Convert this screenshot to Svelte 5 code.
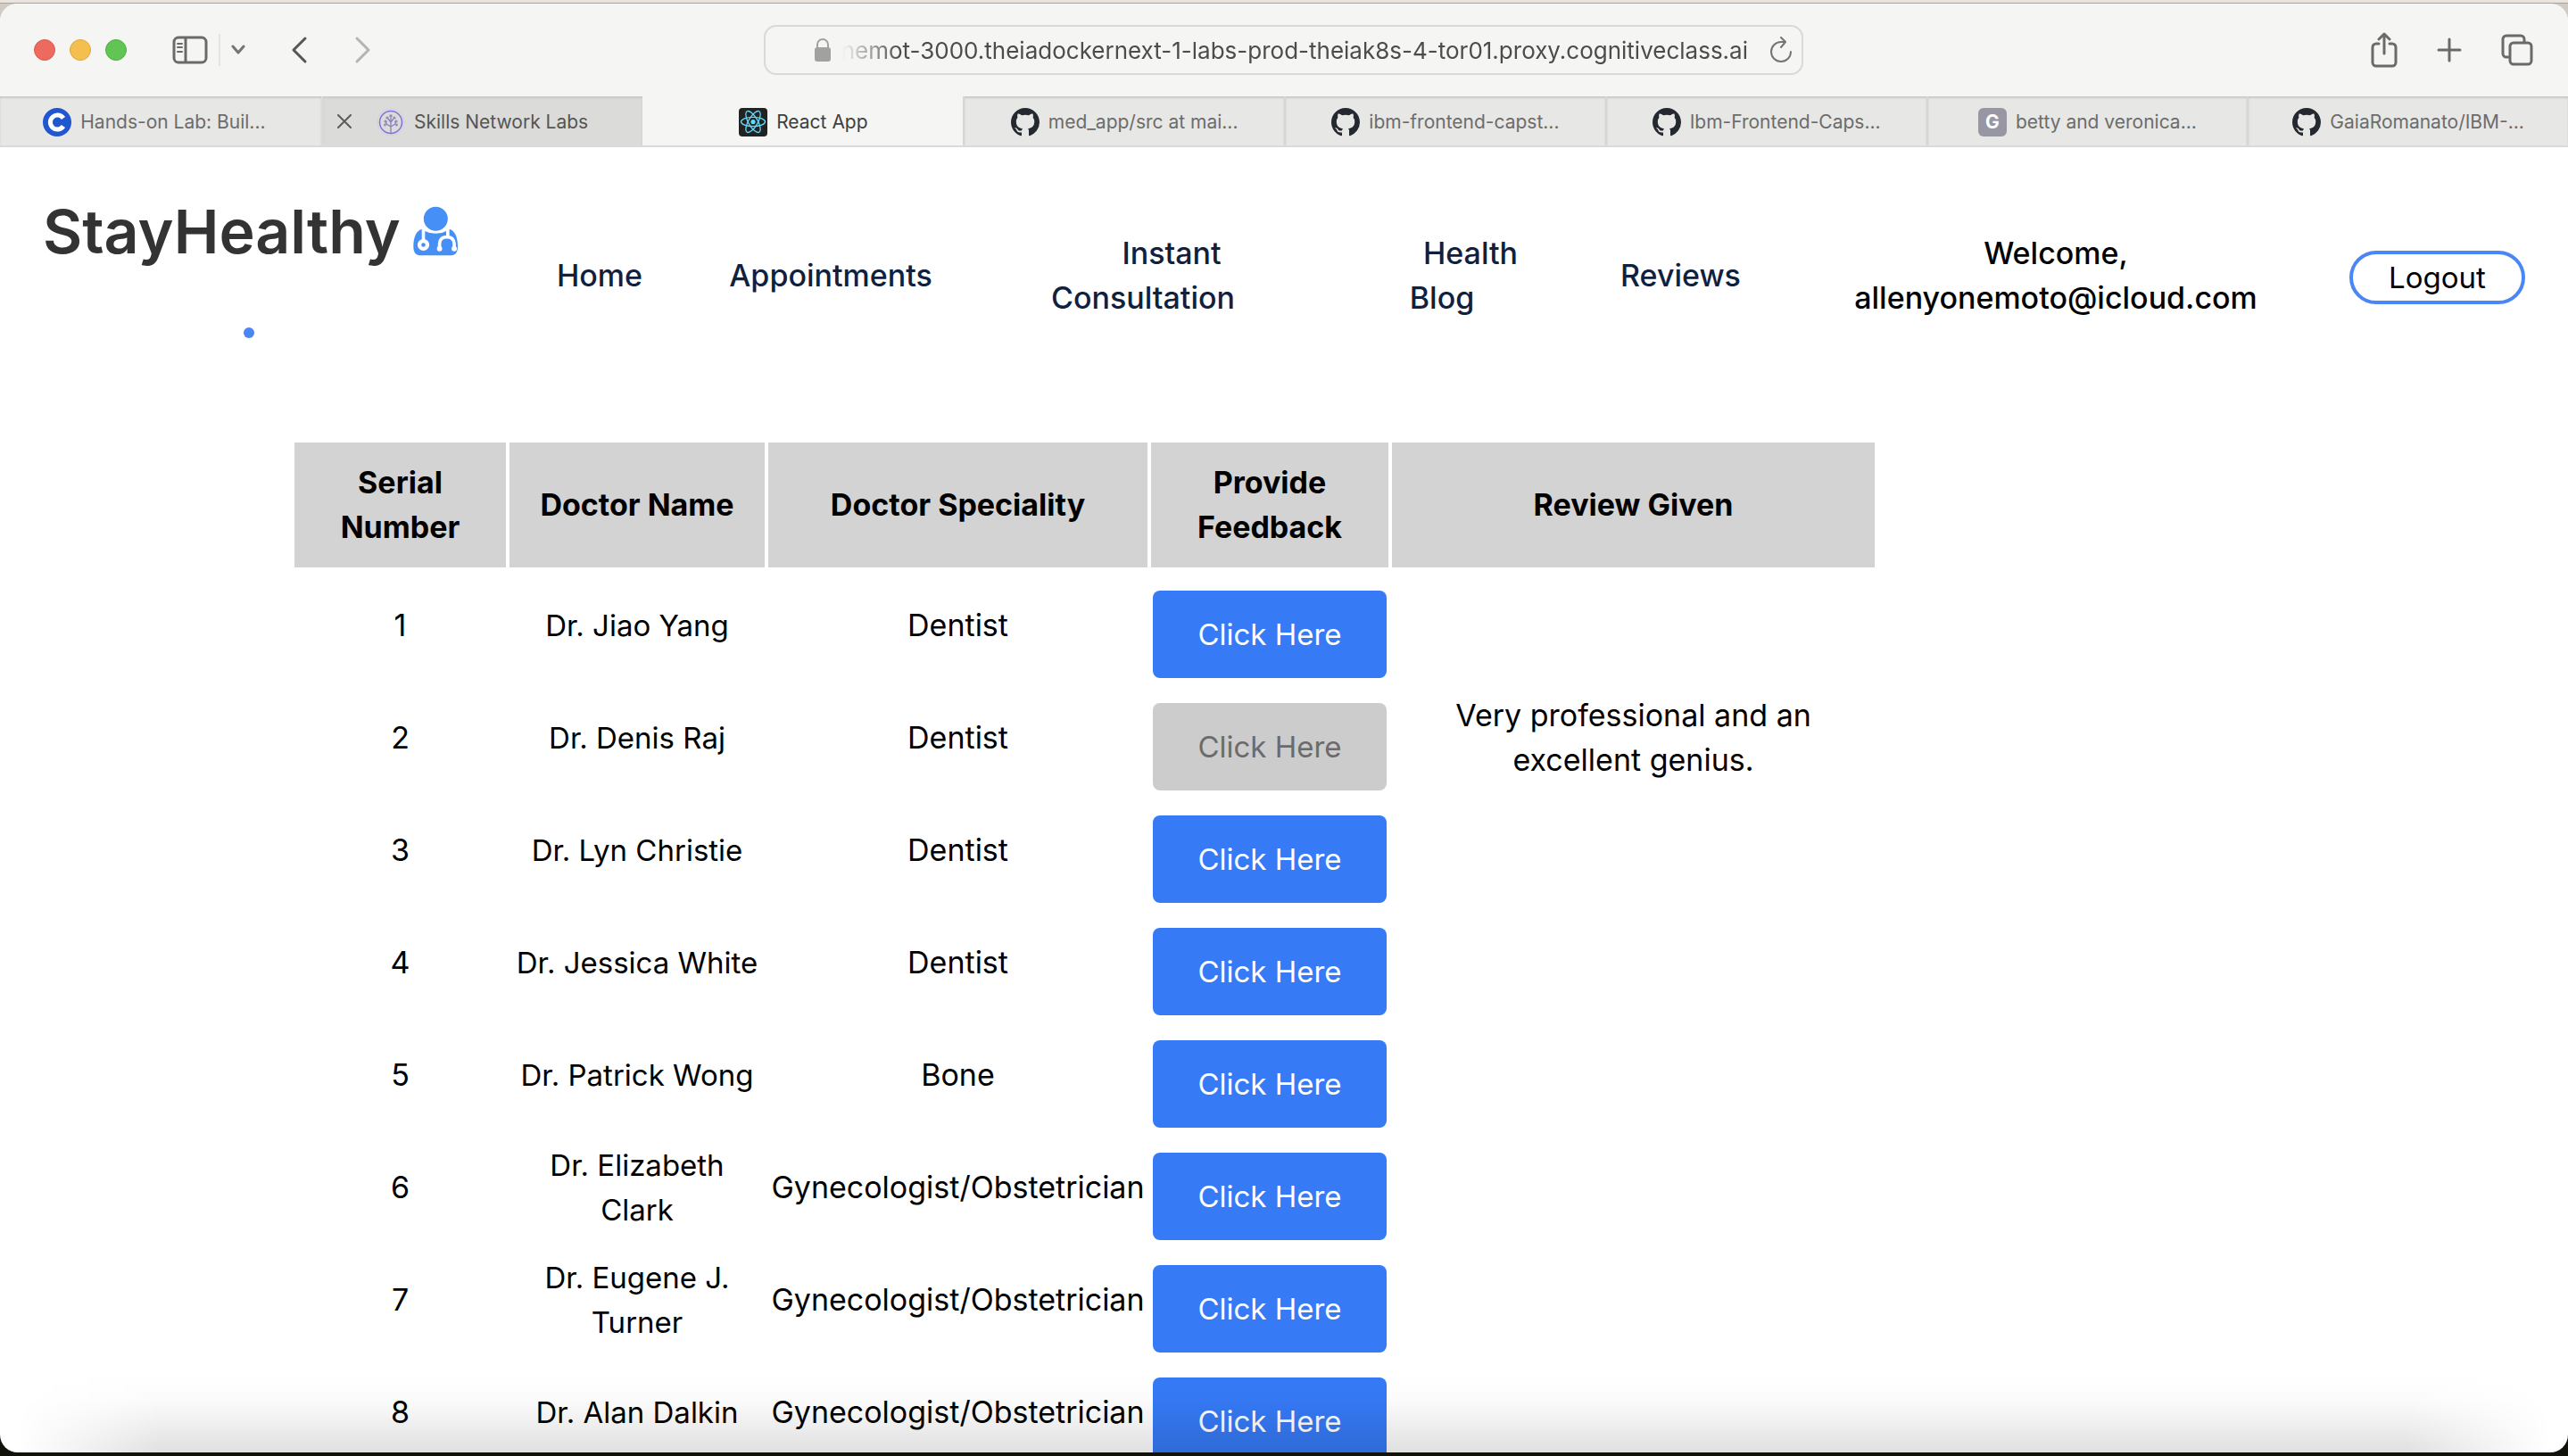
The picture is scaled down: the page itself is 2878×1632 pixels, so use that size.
<script lang="ts">
  type Tab = { title: string; icon: 'coursera' | 'skills' | 'react' | 'github' | 'letter'; state?: 'active' | 'hover' };

  const tabs: Tab[] = [
    { title: 'Hands-on Lab: Buil...', icon: 'coursera' },
    { title: 'Skills Network Labs', icon: 'skills', state: 'hover' },
    { title: 'React App', icon: 'react', state: 'active' },
    { title: 'med_app/src at mai...', icon: 'github' },
    { title: 'ibm-frontend-capst...', icon: 'github' },
    { title: 'Ibm-Frontend-Caps...', icon: 'github' },
    { title: 'betty and veronica...', icon: 'letter' },
    { title: 'GaiaRomanato/IBM-...', icon: 'github' },
  ];

  const doctors = $state([
    { name: 'Dr. Jiao Yang', speciality: 'Dentist', review: '' },
    { name: 'Dr. Denis Raj', speciality: 'Dentist', review: 'Very professional and an excellent genius.' },
    { name: 'Dr. Lyn Christie', speciality: 'Dentist', review: '' },
    { name: 'Dr. Jessica White', speciality: 'Dentist', review: '' },
    { name: 'Dr. Patrick Wong', speciality: 'Bone', review: '' },
    { name: 'Dr. Elizabeth Clark', speciality: 'Gynecologist/Obstetrician', review: '' },
    { name: 'Dr. Eugene J. Turner', speciality: 'Gynecologist/Obstetrician', review: '' },
    { name: 'Dr. Alan Dalkin', speciality: 'Gynecologist/Obstetrician', review: '' },
  ]);

  let address = $state('onemot-3000.theiadockernext-1-labs-prod-theiak8s-4-tor01.proxy.cognitiveclass.ai');
</script>

<div class="desktop">
  <div class="window">
    <header class="toolbar">
      <div class="side left">
        <div class="lights">
          <button class="light red" aria-label="Close window"></button>
          <button class="light yellow" aria-label="Minimise window"></button>
          <button class="light green" aria-label="Zoom window"></button>
        </div>
        <button class="tool" aria-label="Sidebar">
          <svg width="40" height="32" viewBox="0 0 40 32" fill="none" stroke="#6a6a69" stroke-width="3">
            <rect x="2" y="2" width="36" height="28" rx="5" />
            <path d="M15 2v28" />
            <path d="M6 9h5M6 13h5M6 18h5" stroke-width="2" stroke-linecap="round" />
          </svg>
        </button>
        <span class="rule"></span>
        <button class="tool" aria-label="Tab groups">
          <svg width="16" height="12" viewBox="0 0 16 12" fill="none" stroke="#757575" stroke-width="3" stroke-linecap="round" stroke-linejoin="round"><path d="M2 2l6 7 6-7" /></svg>
        </button>
        <button class="tool back" aria-label="Back">
          <svg width="20" height="32" viewBox="0 0 20 32" fill="none" stroke="#555" stroke-width="3" stroke-linecap="round" stroke-linejoin="round"><path d="M17 3L4 16l13 13" /></svg>
        </button>
        <button class="tool forward" aria-label="Forward">
          <svg width="20" height="32" viewBox="0 0 20 32" fill="none" stroke="#b4b4b3" stroke-width="3" stroke-linecap="round" stroke-linejoin="round"><path d="M3 3l13 13L3 29" /></svg>
        </button>
      </div>
      <div class="address">
        <svg width="20" height="28" viewBox="0 0 20 28"><rect x="1" y="11" width="18" height="16" rx="3" fill="#a1a1a0" /><path d="M4 12V8a6 6 0 0 1 12 0v4" fill="none" stroke="#a1a1a0" stroke-width="2" /></svg>
        <input type="text" aria-label="Address" bind:value={address} />
        <button class="tool" aria-label="Reload">
          <svg width="26" height="30" viewBox="0 0 26 30" fill="none" stroke="#757574" stroke-width="2" stroke-linecap="round" stroke-linejoin="round"><path d="M24 17a11 11 0 1 1-11-11h5M13 1l5 5-5 6" /></svg>
        </button>
      </div>
      <div class="side right">
        <button class="tool" aria-label="Share">
          <svg width="30" height="40" viewBox="0 0 30 40" fill="none" stroke="#6a6a69" stroke-width="3" stroke-linecap="round" stroke-linejoin="round"><path d="M9 13H6a4 4 0 0 0-4 4v17a4 4 0 0 0 4 4h18a4 4 0 0 0 4-4V17a4 4 0 0 0-4-4h-3M15 24V3M9 8l6-6 6 6" /></svg>
        </button>
        <button class="tool" aria-label="New tab">
          <svg width="28" height="28" viewBox="0 0 28 28" fill="none" stroke="#6a6a69" stroke-width="3" stroke-linecap="round"><path d="M14 2v24M2 14h24" /></svg>
        </button>
        <button class="tool" aria-label="Tab overview">
          <svg width="36" height="36" viewBox="0 0 36 36" fill="none" stroke="#6a6a69" stroke-width="3"><rect x="10" y="10" width="24" height="24" rx="4" /><path d="M9 26H6a4 4 0 0 1-4-4V6a4 4 0 0 1 4-4h16a4 4 0 0 1 4 4v3" /></svg>
        </button>
      </div>
    </header>

    <div class="tabs" role="tablist">
      {#each tabs as tab}
        <button class="tab {tab.state ?? ''}" role="tab" aria-selected={tab.state === 'active'}>
          {#if tab.state === 'hover'}
            <svg class="close" width="16" height="16" viewBox="0 0 16 16" stroke="#5c5c5b" stroke-width="2" stroke-linecap="round"><path d="M1 1l14 14M15 1L1 15" /></svg>
          {/if}
          {#if tab.icon === 'coursera'}
            <svg width="32" height="32" viewBox="0 0 32 32"><circle cx="16" cy="16" r="16" fill="#2056d0" /><path d="M23 11.500a8 8 0 1 0 0 9" fill="none" stroke="#fff" stroke-width="5" /></svg>
          {:else if tab.icon === 'skills'}
            <svg width="32" height="32" viewBox="0 0 32 32" fill="none">
              <circle cx="16" cy="16" r="15" stroke="#d3cdef" stroke-width="1" />
              <circle cx="16" cy="16" r="12.500" stroke="#8370d8" stroke-width="1.500" />
              <path d="M16 28V11M16 21l-5-3M16 21l5-3M16 16l-3-4M16 16l3-4M11 18v-3M21 18v-3" stroke="#8a7fc0" stroke-width="1.300" />
              <g fill="#9489b8"><circle cx="16" cy="9" r="1.800" /><circle cx="12" cy="11" r="1.600" /><circle cx="20" cy="11" r="1.600" /><circle cx="10" cy="15" r="1.600" /><circle cx="22" cy="15" r="1.600" /><circle cx="9.500" cy="19" r="1.400" /><circle cx="22.500" cy="19" r="1.400" /></g>
            </svg>
          {:else if tab.icon === 'react'}
            <svg width="32" height="32" viewBox="0 0 32 32">
              <rect width="32" height="32" rx="4" fill="#222" />
              <g fill="none" stroke="#61dafb" stroke-width="1.300"><ellipse cx="16" cy="15.500" rx="13.500" ry="5.200" /><ellipse cx="16" cy="15.500" rx="13.500" ry="5.200" transform="rotate(60 16 15.500)" /><ellipse cx="16" cy="15.500" rx="13.500" ry="5.200" transform="rotate(120 16 15.500)" /></g>
              <circle cx="16" cy="15.500" r="2.600" fill="#61dafb" />
            </svg>
          {:else if tab.icon === 'github'}
            <svg width="32" height="32" viewBox="0 0 16 16" fill="#24292f"><path d="M8 0C3.580 0 0 3.580 0 8c0 3.540 2.290 6.530 5.470 7.590.4.070.55-.17.55-.38 0-.19-.01-.82-.01-1.490-2.010.37-2.530-.49-2.690-.94-.09-.23-.48-.94-.82-1.130-.28-.15-.68-.52-.01-.53.63-.01 1.080.58 1.230.82.72 1.210 1.870.87 2.330.66.07-.52.28-.87.51-1.070-1.780-.2-3.640-.89-3.640-3.950 0-.87.31-1.590.82-2.150-.08-.2-.36-1.020.08-2.120 0 0 .67-.21 2.200.82.64-.18 1.320-.27 2-.27s1.360.09 2 .27c1.530-1.040 2.200-.82 2.200-.82.44 1.100.16 1.920.08 2.120.51.56.82 1.270.82 2.150 0 3.070-1.870 3.750-3.650 3.950.29.25.54.73.54 1.480 0 1.070-.01 1.930-.01 2.200 0 .21.15.46.55.38A8.010 8.010 0 0 0 16 8c0-4.420-3.580-8-8-8z" /></svg>
          {:else}
            <span class="letter">G</span>
          {/if}
          <span class="title">{tab.title}</span>
        </button>
      {/each}
    </div>

    <main>
      <nav>
        <div class="brand">
          <a class="logo" href="#home">
            <span>StayHealthy</span>
            <svg width="50" height="56" viewBox="62 34 152 168">
              <circle cx="139" cy="76" r="41" fill="#458ff6" />
              <path d="M92 111c-20 6-29 28-29 60 0 20 8 30 27 30h97c19 0 27-10 27-30 0-32-9-54-29-60-10 9-26 15-46 15s-37-6-47-15z" fill="#458ff6" />
              <g fill="none" stroke="#fff" stroke-width="11" stroke-linecap="round">
                <path d="M97 108v42M180 108v30M152 177v-16c0-12 8-23 25-23s25 11 25 23v16" />
              </g>
              <circle cx="97" cy="165" r="20" fill="#fff" /><circle cx="97" cy="165" r="7" fill="#458ff6" />
              <circle cx="152" cy="178" r="9" fill="#fff" /><circle cx="202" cy="178" r="9" fill="#fff" />
            </svg>
          </a>
          <span class="dot"></span>
        </div>
        <ul class="links">
          <li class="home"><a href="#home">Home</a></li>
          <li class="appointments"><a href="#appointments">Appointments</a></li>
          <li class="consult"><a class="lead" href="#consultation">Instant Consultation</a></li>
          <li class="blog"><a class="lead" href="#blog">Health Blog</a></li>
          <li class="reviews"><a href="#reviews">Reviews</a></li>
          <li class="welcome">Welcome, allenyonemoto@icloud.com</li>
          <li class="out"><button class="logout">Logout</button></li>
        </ul>
      </nav>

      <section class="feedback">
        <table>
          <colgroup><col class="c1" /><col class="c2" /><col class="c3" /><col class="c4" /><col class="c5" /></colgroup>
          <thead>
            <tr><th>Serial Number</th><th>Doctor Name</th><th>Doctor Speciality</th><th>Provide Feedback</th><th>Review Given</th></tr>
          </thead>
          <tbody>
            {#each doctors as doctor, i}
              <tr>
                <td>{i + 1}</td>
                <td class="name">{doctor.name}</td>
                <td class="speciality">{doctor.speciality}</td>
                <td><button class="give" disabled={doctor.review !== ''}>Click Here</button></td>
                <td class="review">{doctor.review}</td>
              </tr>
            {/each}
          </tbody>
        </table>
      </section>
      <div class="shade"></div>
    </main>
  </div>
</div>

<style>
  :global(body) { background: #12120c; }
  * { box-sizing: border-box; }
  button { font: inherit; border: 0; background: none; padding: 0; cursor: pointer; }
  svg { display: block; flex: none; }
  a { color: inherit; text-decoration: none; }

  .desktop {
    height: 100vh;
    padding: 4px 0;
    background: linear-gradient(#e9e5de 0 3px, #a5a59f 3px 4px, #d0ccc4 4px 50%, #12120c 50%);
    font-family: Inter, "Open Sans", sans-serif;
    overflow: hidden;
  }
  .window {
    display: flex;
    flex-direction: column;
    height: 100%;
    border-radius: 20px;
    background: #fff;
    overflow: hidden;
  }

  .toolbar {
    display: flex;
    align-items: center;
    height: 104px;
    flex: none;
    padding: 0 39px 0 38px;
    background: #f5f5f3;
  }
  .side { flex: 1; display: flex; align-items: center; }
  .lights { display: flex; gap: 16px; margin-right: 51px; }
  .light { width: 24px; height: 24px; border-radius: 50%; border: 1px solid; }
  .red { background: #ed6a5e; border-color: #d95b50; }
  .yellow { background: #f5bf4f; border-color: #dca93e; }
  .green { background: #61c554; border-color: #51ad45; }
  .rule { width: 2px; height: 36px; margin: 0 12px; background: #e3e3e1; }
  .back { margin-left: 50px; }
  .forward { margin-left: 52px; }
  .right { justify-content: flex-end; gap: 44px; }
  .address {
    display: flex;
    align-items: center;
    width: 1165px;
    height: 56px;
    padding: 0 10px 0 54px;
    border: 2px solid #d9d9d7;
    border-radius: 14px;
    background: #f5f5f3;
  }
  .address input {
    flex: 1;
    min-width: 0;
    margin: 0 24px 0 -8px;
    padding: 0;
    border: 0;
    outline: 0;
    background: none;
    color: #4c4c4b;
    font: 26px Inter, sans-serif;
    text-align: right;
    mask-image: linear-gradient(90deg, transparent 20px, #000 84px);
  }

  .tabs {
    display: grid;
    grid-template-columns: repeat(8, minmax(0, 1fr));
    height: 57px;
    flex: none;
    background: #e7e7e5;
    border-bottom: 2px solid #dadad8;
  }
  .tab {
    position: relative;
    display: flex;
    align-items: center;
    justify-content: center;
    gap: 10px;
    padding-top: 2px;
    border-left: 2px solid #d6d6d4;
    box-shadow: inset 0 2px 2px #c9c9c7;
    color: #6c6c6b;
    font-size: 21px;
    white-space: nowrap;
  }
  .tab:first-child { border-left: 0; padding-right: 14px; }
  .tab.active { background: #f5f5f3; border-left-color: #f5f5f3; box-shadow: none; color: #3f3f3e; }
  .tab.hover { background: #dbdbd9; border-left-color: #dbdbd9; color: #555554; }
  .close { position: absolute; left: 16px; top: 20px; }
  .letter {
    display: grid;
    place-items: center;
    width: 32px;
    height: 32px;
    border-radius: 6px;
    background: #9797a3;
    color: #fff;
    font-weight: 700;
  }

  main { position: relative; flex: 1; min-height: 0; overflow: hidden; color: #000; font-size: 34px; line-height: 50px; }
  nav { display: flex; padding: 0 48px; height: 331px; }
  .brand { width: 462px; padding-top: 56px; flex: none; }
  .logo { display: flex; align-items: center; gap: 14px; color: #333; font-size: 68px; line-height: 76px; font-weight: 600; }
  .dot { display: block; width: 12px; height: 12px; margin: 70px 0 0 225px; border-radius: 50%; background: #4a86f5; }
  .links {
    flex: 1;
    display: flex;
    align-items: center;
    height: 100px;
    margin: 94px 0 0;
    padding: 0;
    list-style: none;
    color: #10213f;
    font-weight: 500;
    text-align: center;
  }
  .home { width: 324px; }
  .appointments { width: 194px; display: flex; justify-content: center; }
  .consult { width: 446px; padding: 0 80px; margin-left: 30px; }
  .blog { width: 174px; margin-left: 25px; }
  .reviews { width: 128px; margin-left: 113px; }
  .welcome { width: 460px; margin-left: 130px; color: #000; }
  .out { margin-left: auto; padding-top: 4px; }
  .lead { padding-left: 64px; }
  .logout {
    display: block;
    width: 197px;
    height: 60px;
    border: 4px solid #4a86f5;
    border-radius: 30px;
    background: #fff;
    color: #000;
    font-size: 33px;
    font-weight: 400;
  }

  .feedback { padding-left: 326px; margin-top: -4px; }
  table { width: 1779px; table-layout: fixed; border-collapse: separate; border-spacing: 4px; text-align: center; }
  .c1 { width: 237px; }
  .c2 { width: 286px; }
  .c3 { width: 425px; }
  .c4 { width: 266px; }
  th { height: 140px; padding: 20px; background: #d3d3d3; font-weight: 700; }
  td { height: 122px; padding: 2px; }
  .speciality { white-space: nowrap; }
  .name { font-size: 33px; }
  .review { padding: 0 60px; }
  .give {
    display: block;
    width: 100%;
    height: 98px;
    margin-top: 20px;
    border-radius: 8px;
    background: #367af6;
    color: #fff;
    font-size: 33px;
  }
  .give:disabled { background: #ccc; color: #6b6b6b; cursor: default; }

  .shade {
    position: absolute;
    inset: auto 0 0 0;
    height: 90px;
    background: linear-gradient(transparent, rgba(0, 0, 0, 0.016) 35%, rgba(0, 0, 0, 0.12));
    mask-image: linear-gradient(90deg, transparent 20px, #000 180px, #000 calc(100% - 180px), transparent calc(100% - 20px));
    pointer-events: none;
  }
</style>
